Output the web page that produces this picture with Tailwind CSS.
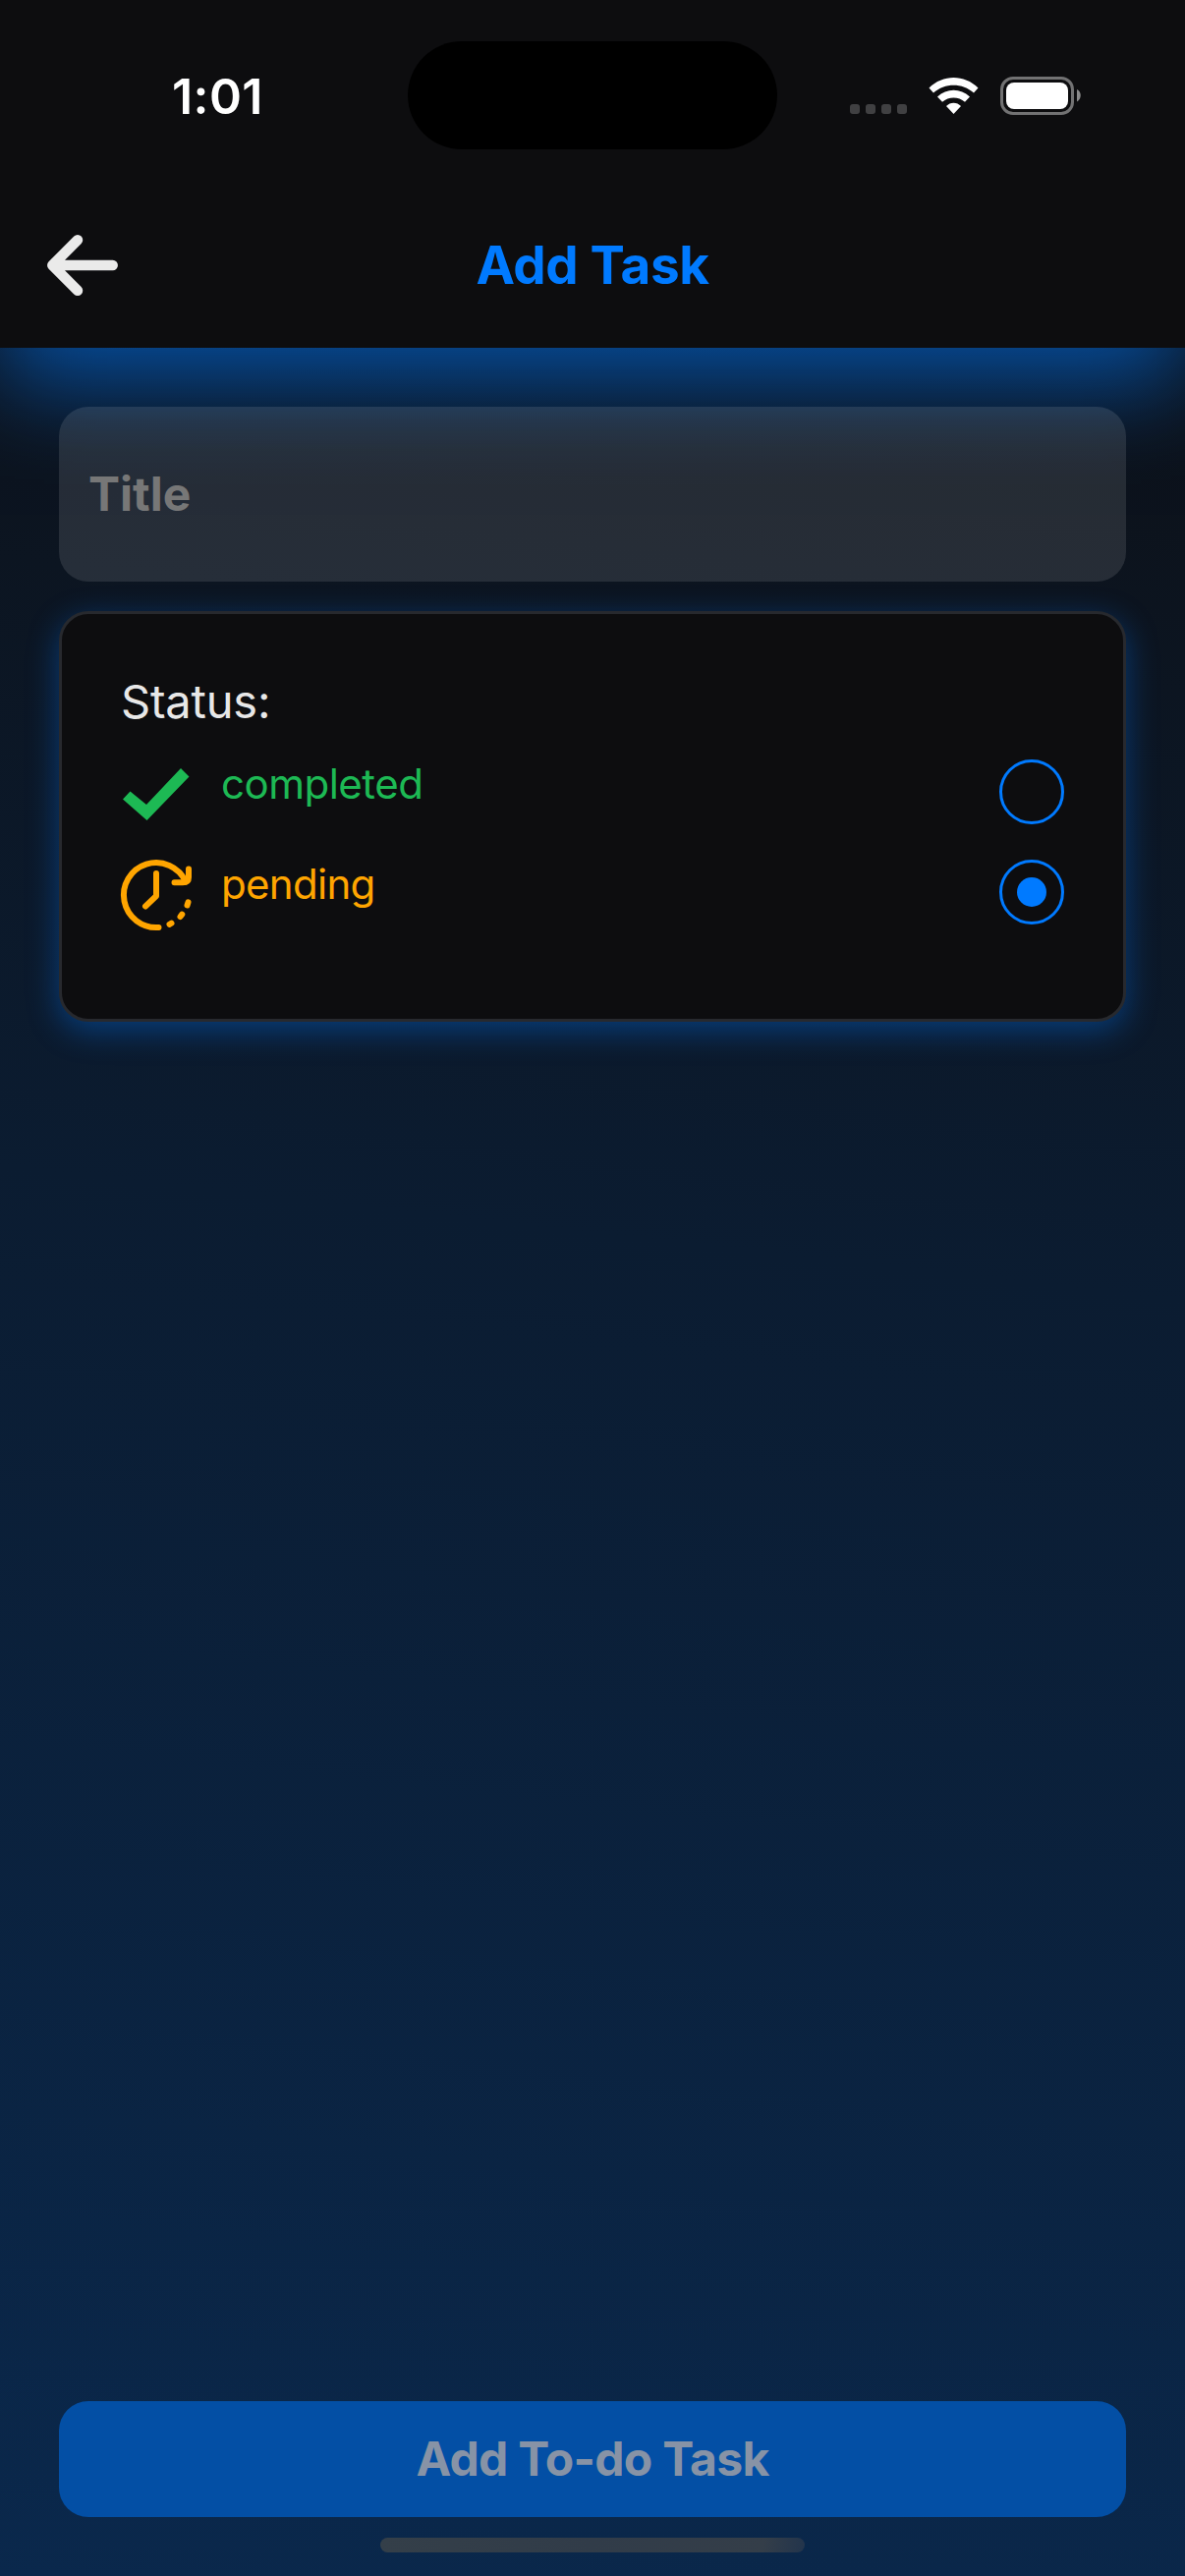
<!DOCTYPE html>
<html lang="en">
<head>
<meta charset="utf-8">
<title>Add Task</title>
<script src="https://cdn.jsdelivr.net/npm/@tailwindcss/browser@4"></script>
</head>
<body class="bg-[#0d0d0f]">
<div class="relative flex h-[2622px] w-[1206px] flex-col overflow-hidden bg-[linear-gradient(186.5deg,#0d0d0f_0%,#0b1c31_48%,#0a284c_100%)] font-['Inter',sans-serif]">
  <header class="flex h-[354px] shrink-0 flex-col bg-[#0d0d0f] shadow-[0_36px_90px_rgba(0,122,255,0.58)]">
    <div class="flex h-[186px] items-start">
      <div class="mt-[67px] w-[415px] pl-[175px] text-[50px] leading-[62px] font-semibold tracking-[0.4px] text-white">1:01</div>
      <div class="mt-[42px] h-[110px] w-[376px] rounded-[55px] bg-black"></div>
      <svg class="mt-[60px] ml-[49px] h-20 w-[280px]" viewBox="0 0 280 80">
        <g fill="#404042"><rect x="25" y="46" width="10" height="10" rx="3"/><rect x="41" y="46" width="10" height="10" rx="3"/><rect x="57" y="46" width="10" height="10" rx="3"/><rect x="73" y="46" width="10" height="10" rx="3"/></g>
        <g fill="#fff">
          <path d="M105.500 29.500C119.500 15.500 141.500 15.500 155.500 29.500L151 34.500C139.500 24 121.500 24 110 34.500Z"/>
          <path d="M114 38.500C123.500 29.500 137.500 29.500 147 38.500L142 43.800C135.500 38 125.500 38 119 43.800Z"/>
          <path d="M123 48C127 43.500 134 43.500 138 48L130.500 56Z"/>
        </g>
        <rect x="179.500" y="19.500" width="72" height="36" rx="11.500" fill="none" stroke="#727273" stroke-width="3"/>
        <rect x="184" y="24" width="63" height="27" rx="8" fill="#fff"/>
        <path d="M256 31C261 33 261 41 256 43.500Z" fill="#8a8a8b"/>
      </svg>
    </div>
    <div class="grid h-[168px] grid-cols-[200px_1fr_200px] items-start">
      <svg class="mt-[48px] ml-[42px] h-[72px] w-[84px]" viewBox="0 0 84 72" fill="none" stroke="#eaeaea" stroke-width="10.500" stroke-linecap="round" stroke-linejoin="round"><path d="M37 10.300L11.300 36L37 61.700M11.300 36H72.700"/></svg>
      <h1 class="mt-[52px] text-center text-[53px] leading-[64px] font-bold tracking-[-0.4px] text-[#007aff]">Add Task</h1>
    </div>
  </header>
  <main class="flex grow flex-col px-[60px] pt-[60px]">
    <div class="relative flex h-[178px] items-center rounded-[30px] bg-white/[0.11] px-[30px] text-[48px] font-bold text-[#777777]">Title</div>
    <section class="relative mt-[30px] h-[418px] rounded-[30px] border-[3px] border-[#27292e] bg-[#0d0d0f] px-[60px] pt-[60px] shadow-[0_9px_32px_rgba(0,122,255,0.38)]">
      <h2 class="-mt-px text-[47px] leading-[60px] tracking-[-0.2px] text-[#e8e8e8]">Status:</h2>
      <div class="mt-[29px] flex h-[66px]">
        <svg class="h-[72px] w-[72px]" viewBox="0 0 72 72" fill="#1db954"><path d="M2 31.500L9.500 23.500L26 37L61 0L69.500 8.500L26.500 53Z" transform="translate(0 9)"/></svg>
        <span class="ml-[30px] text-[42px] leading-[50px] tracking-[-0.5px] text-[#1db954]">completed</span>
        <span class="ml-auto h-[66px] w-[66px] rounded-full border-[3px] border-[#007aff]"></span>
      </div>
      <div class="mt-[36px] flex h-[66px]">
        <svg class="h-[72px] w-[72px] overflow-visible" viewBox="0 0 72 72" fill="none" stroke="#ffa500" stroke-width="6" stroke-linecap="round" stroke-linejoin="round"><path d="M38.500 69A33 33 0 1 1 66 22.500"/><path d="M69 9.500V18Q69 23.300 63 23.300H54.500"/><path d="M36 14V37L25 47.500"/><path d="M68.500 43.300L67.500 46.500M62.300 55.600L60.500 58M51.500 64.700L49.500 65.800"/></svg>
        <span class="ml-[30px] text-[42px] leading-[50px] tracking-[-0.7px] text-[#ffa500]">pending</span>
        <span class="ml-auto flex h-[66px] w-[66px] items-center justify-center rounded-full border-[3px] border-[#007aff]"><span class="h-[30px] w-[30px] rounded-full bg-[#007aff]"></span></span>
      </div>
    </section>
    <button class="mt-auto h-[118px] rounded-[30px] bg-[#034fa5] text-[48px] font-bold tracking-[-0.7px] text-[#8793a6]">Add To-do Task</button>
  </main>
  <footer class="flex h-[60px] shrink-0 justify-center pt-[21px]"><div class="h-[15px] w-[432px] rounded-full bg-[linear-gradient(100deg,#343f49_0%,#313c49_50%,#343e49_90%,#22344c_100%)]"></div></footer>
</div>
</body>
</html>
